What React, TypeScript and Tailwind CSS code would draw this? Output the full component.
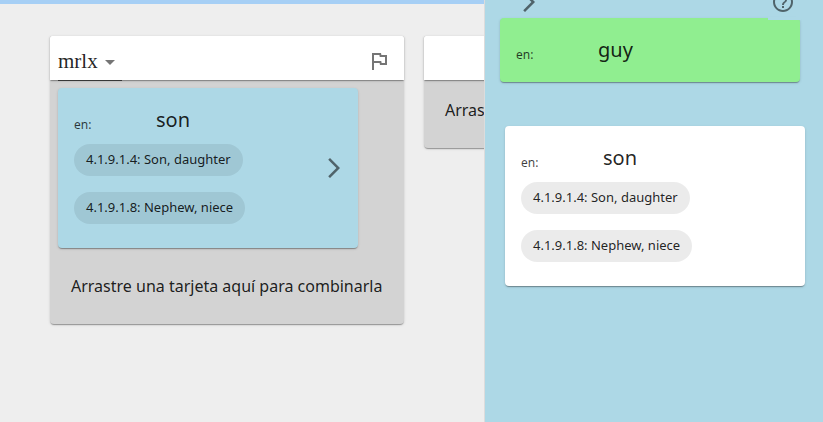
import type { ReactNode } from "react";

const elevation =
  "shadow-[0px_2px_1px_-1px_rgba(0,0,0,0.2),0px_1px_1px_0px_rgba(0,0,0,0.14),0px_1px_3px_0px_rgba(0,0,0,0.12)]";

function Icon({ d, className = "" }: { d: string; className?: string }) {
  return (
    <svg viewBox="0 0 24 24" className={`size-6 shrink-0 fill-black/54 ${className}`}>
      <path d={d} />
    </svg>
  );
}

const FORWARD = "M6.23 20.23 8 22l10-10L8 2 6.23 3.77 14.46 12z";
const FLAG = "m12.36 6 .4 2H18v6h-3.36l-.4-2H7V6h5.36M14 4H5v17h2v-7h5.6l.4 2h7V6h-5.6L14 4z";
const HELP =
  "M11 18h2v-2h-2v2zm1-16C6.48 2 2 6.48 2 12s4.48 10 10 10 10-4.48 10-10S17.52 2 12 2zm0 18c-4.41 0-8-3.59-8-8s3.59-8 8-8 8 3.59 8 8-3.59 8-8 8zm0-14c-2.21 0-4 1.79-4 4h2c0-1.1.9-2 2-2s2 .9 2 2c0 2-3 1.75-3 5h2c0-2.25 3-2.5 3-5 0-2.21-1.79-4-4-4z";

function Gloss({ word }: { word: string }) {
  return (
    <div className="flex h-6 items-start">
      <span className="w-[82px] pt-[9px] text-xs leading-4 text-black/75">en:</span>
      <span className="text-xl leading-6 text-black/87">{word}</span>
    </div>
  );
}

function Domain({ children }: { children: ReactNode }) {
  return (
    <span className="flex h-8 items-center rounded-full bg-black/8 px-3 pb-px text-[13px] whitespace-nowrap text-black/87">
      {children}
    </span>
  );
}

function SenseCard({ className, arrow }: { className: string; arrow?: boolean }) {
  return (
    <div className={`flex h-40 w-[300px] items-center justify-between rounded px-4 ${elevation} ${className}`}>
      <div className="flex h-full flex-col items-start pt-5">
        <Gloss word="son" />
        <div className="mt-3 flex flex-col items-start gap-4">
          <Domain>4.1.9.1.4: Son, daughter</Domain>
          <Domain>4.1.9.1.8: Nephew, niece</Domain>
        </div>
      </div>
      {arrow && <Icon d={FORWARD} className="-mr-1" />}
    </div>
  );
}

export default function App() {
  return (
    <div className="relative h-[422px] w-[823px] overflow-hidden bg-[#eeeeee] font-['Noto_Sans',sans-serif] text-black/87">
      <div className="h-1 bg-[#a6cff5]" />
      <main className="flex items-start gap-5 pt-8 pl-[50px]">
        <section className={`h-72 w-[354px] shrink-0 rounded-b bg-[lightgray] ${elevation}`}>
          <header className={`flex h-11 justify-between rounded-t-[2px] bg-white pr-[13px] pl-2 ${elevation}`}>
            <div className="flex h-[45px] w-16 items-center border-b border-black/60">
              <span className="w-10 pt-1.5 font-['Liberation_Serif',serif] text-[21px] leading-7">mrlx</span>
              <Icon d="M7 10l5 5 5-5z" className="mt-2" />
            </div>
            <Icon d={FLAG} className="mt-[13px]" />
          </header>
          <div className="px-2 pt-2">
            <SenseCard className="bg-[lightblue]" arrow />
          </div>
          <p className="mt-[26px] pl-[21px] text-base leading-6">Arrastre una tarjeta aquí para combinarla</p>
        </section>
        <section className={`h-28 w-[354px] shrink-0 rounded-b bg-[lightgray] ${elevation}`}>
          <header className={`h-11 rounded-t-[2px] bg-white ${elevation}`} />
          <p className="pt-[18px] pl-[21px] text-base leading-6">Arrastre una tarjeta aquí para combinarla</p>
        </section>
      </main>
      <aside className="absolute inset-y-0 right-0 w-[339px] border-l border-[#dcdcdc] bg-[lightblue]">
        <div className="-mt-2.5 flex h-7 justify-between pr-7 pl-8">
          <Icon d={FORWARD} />
          <Icon d={HELP} />
        </div>
        <div className={`relative ml-[15px] h-16 w-[300px] rounded bg-[lightgreen] px-4 pt-5 ${elevation}`}>
          <span className="absolute -top-px -right-px h-[3px] w-[33px] bg-[lightblue]" />
          <Gloss word="guy" />
        </div>
        <div className="mt-11 ml-5">
          <SenseCard className="bg-white" />
        </div>
      </aside>
    </div>
  );
}
